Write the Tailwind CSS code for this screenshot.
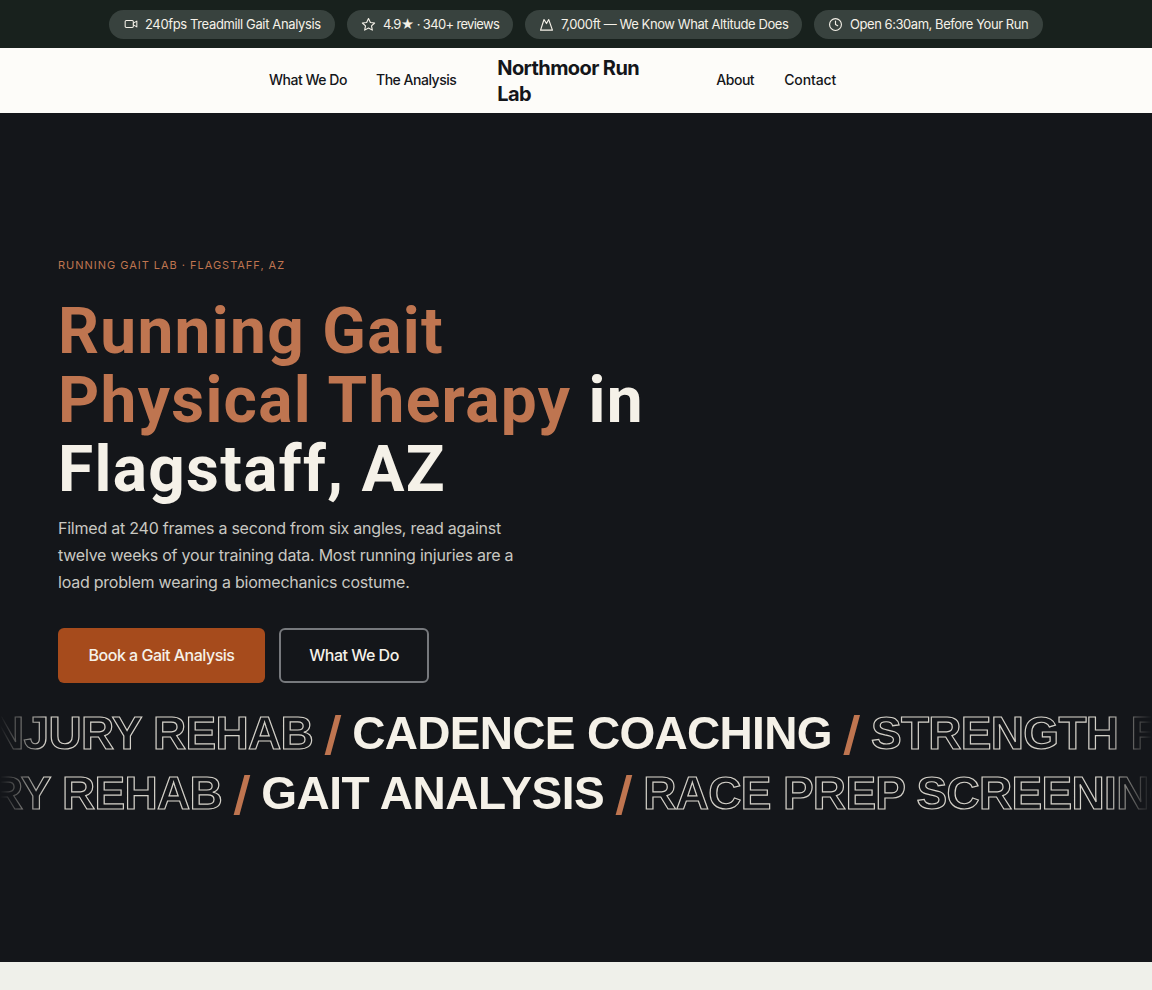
<!DOCTYPE html>
<html lang="en">
<head>
    <meta charset="UTF-8">
    <meta name="viewport" content="width=device-width, initial-scale=1.0">
    <title>Northmoor Run Lab</title>
    <script src="https://cdn.jsdelivr.net/npm/@tailwindcss/browser@4"></script>
</head>
<body class="bg-[#eff0ea] font-['Inter',sans-serif] overflow-hidden h-[990px]">

    <!-- Trust bar -->
    <div class="bg-[#18211d] h-12 flex items-center justify-center gap-3 text-[13px] text-[#f5f1e8]">
        <div class="flex items-center gap-[7px] h-[29px] pl-[15px] pr-[14px] rounded-full bg-[#38423e]">
            <svg class="w-[14px] h-[14px]" viewBox="0 0 24 24" fill="none" stroke="currentColor" stroke-width="1.8" stroke-linecap="round" stroke-linejoin="round"><rect x="2" y="6" width="14" height="12" rx="2"/><path d="M16 10.5 22 7v10l-6-3.500"/></svg>
            <span class="w-[176px] pt-[1px] whitespace-nowrap tracking-[-0.37px]">240fps Treadmill Gait Analysis</span>
        </div>
        <div class="flex items-center gap-[7px] h-[29px] pl-[14px] pr-[14px] rounded-full bg-[#38423e]">
            <svg class="w-[15px] h-[15px]" viewBox="0 0 24 24" fill="none" stroke="currentColor" stroke-width="1.8" stroke-linejoin="round"><path d="m12 2.500 3 6.200 6.800.9-5 4.700 1.300 6.700-6.100-3.300-6.100 3.300 1.300-6.700-5-4.700 6.800-.9z"/></svg>
            <span class="w-[116px] pt-[1px] whitespace-nowrap tracking-[-0.65px]">4.9★ · 340+ reviews</span>
        </div>
        <div class="flex items-center gap-[7px] h-[29px] pl-[14px] pr-[14px] rounded-full bg-[#38423e]">
            <svg class="w-[15px] h-[15px]" viewBox="0 0 24 24" fill="none" stroke="currentColor" stroke-width="1.8" stroke-linecap="round" stroke-linejoin="round"><path d="M2.500 21 8 4l4 6.500L15.500 4l6 17z"/></svg>
            <span class="w-[227px] pt-[1px] whitespace-nowrap tracking-[-0.42px]">7,000ft — We Know What Altitude Does</span>
        </div>
        <div class="flex items-center gap-[7px] h-[29px] pl-[14px] pr-[14px] rounded-full bg-[#38423e]">
            <svg class="w-[15px] h-[15px]" viewBox="0 0 24 24" fill="none" stroke="currentColor" stroke-width="1.8" stroke-linecap="round" stroke-linejoin="round"><circle cx="12" cy="12" r="9.500"/><path d="M12 6.500V12l3.500 2"/></svg>
            <span class="w-[179px] pt-[1px] whitespace-nowrap tracking-[-0.45px]">Open 6:30am, Before Your Run</span>
        </div>
    </div>

    <!-- Navbar -->
    <nav class="bg-[#fdfcf9] h-[65px] flex items-center pl-[269px] pb-[2px] text-[#14161a] text-[14px] font-medium tracking-[-0.48px]">
        <a href="#" class="mr-[29px]">What We Do</a>
        <a href="#" class="mr-[41px]">The Analysis</a>
        <a href="#" class="w-[179px] mr-10 mt-[2px] text-[20px] leading-[26px] font-bold tracking-[-0.6px]">Northmoor Run Lab</a>
        <a href="#" class="mr-[30px]">About</a>
        <a href="#" class="tracking-[-0.1px]">Contact</a>
    </nav>

    <!-- Hero -->
    <section class="bg-[#14161a] h-[849px] flex flex-col pt-[145px]">
        <div class="pl-[58px]">
            <p class="text-[11px] leading-[14px] tracking-[0.98px] text-[#bf7550]">RUNNING GAIT LAB · FLAGSTAFF, AZ</p>
            <h1 class="mt-[25px] w-[620px] font-['Roboto',sans-serif] text-[64px] leading-[69px] font-bold tracking-[1.3px] text-[#f5f1e8]">
                <span class="text-[#bf7550]">Running Gait Physical Therapy</span> in Flagstaff, AZ
            </h1>
            <p class="mt-[11px] w-[480px] text-[16px] leading-[27px] tracking-[-0.23px] text-[#c9c8c2]">Filmed at 240 frames a second from six angles, read against twelve weeks of your training data. Most running injuries are a load problem wearing a biomechanics costume.</p>
            <div class="mt-[32px] flex gap-[14px] text-[16px] tracking-[-0.5px] font-medium text-[#f5f1e8]">
                <a href="#" class="h-[55px] w-[207px] pb-[1px] rounded-md bg-[#a64b1c] flex items-center justify-center">Book a Gait Analysis</a>
                <a href="#" class="h-[55px] w-[150px] pb-[1px] rounded-md border-2 border-[#77797d] flex items-center justify-center">What We Do</a>
            </div>
        </div>

        <!-- Service marquee -->
        <div class="mt-5 overflow-hidden [mask-image:linear-gradient(90deg,transparent,black_4%,black_96%,transparent)] font-['Liberation_Sans',sans-serif] font-bold text-[46px] leading-[60px] tracking-[-0.7px] whitespace-nowrap">
            <div class="flex gap-[11px] ml-[-21px]">
                <span class="text-transparent [-webkit-text-stroke:1.2px_#d3d0c8]">INJURY REHAB</span>
                <span class="font-['Inter',sans-serif] text-[#bf7550]">/</span>
                <span class="text-[#f5f1e8]">CADENCE COACHING</span>
                <span class="font-['Inter',sans-serif] text-[#bf7550]">/</span>
                <span class="text-transparent [-webkit-text-stroke:1.2px_#d3d0c8]">STRENGTH FOR RUNNERS</span>
            </div>
            <div class="flex gap-[11px] ml-[-112px]">
                <span class="text-transparent [-webkit-text-stroke:1.2px_#d3d0c8]">INJURY REHAB</span>
                <span class="font-['Inter',sans-serif] text-[#bf7550]">/</span>
                <span class="text-[#f5f1e8] tracking-[-0.5px]">GAIT ANALYSIS</span>
                <span class="font-['Inter',sans-serif] text-[#bf7550]">/</span>
                <span class="text-transparent [-webkit-text-stroke:1.2px_#d3d0c8]">RACE PREP SCREENING</span>
            </div>
        </div>
    </section>

</body>
</html>
